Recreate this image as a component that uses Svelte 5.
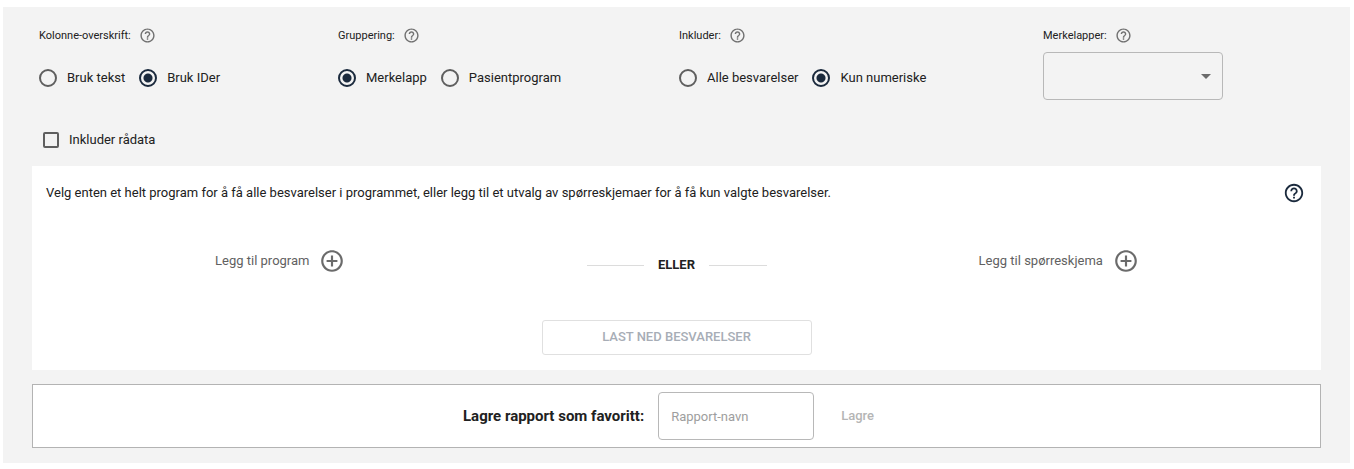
<script lang="ts">
  let headerMode = $state('id');
  let grouping = $state('label');
  let include = $state('numeric');
  let label = $state('');
  let rawData = $state(false);
  let reportName = $state('');
</script>

{#snippet helpIcon()}
  <svg viewBox="0 0 24 24" aria-hidden="true">
    <path
      d="M11 18h2v-2h-2v2zm1-16C6.48 2 2 6.48 2 12s4.48 10 10 10 10-4.48 10-10S17.52 2 12 2zm0 18c-4.41 0-8-3.59-8-8s3.59-8 8-8 8 3.59 8 8-3.59 8-8 8zm0-14c-2.21 0-4 1.79-4 4h2c0-1.1.9-2 2-2s2 .9 2 2c0 2-3 1.75-3 5h2c0-2.25 3-2.5 3-5 0-2.21-1.79-4-4-4z"
    />
  </svg>
{/snippet}

{#snippet addIcon()}
  <svg viewBox="0 0 24 24" aria-hidden="true">
    <path
      d="M13 7h-2v4H7v2h4v4h2v-4h4v-2h-4V7zm-1-5C6.48 2 2 6.48 2 12s4.48 10 10 10 10-4.48 10-10S17.52 2 12 2zm0 18c-4.41 0-8-3.59-8-8s3.59-8 8-8 8 3.59 8 8-3.59 8-8 8z"
    />
  </svg>
{/snippet}

<main class="report">
  <form class="options" onsubmit={(e) => e.preventDefault()}>
    <fieldset class="option">
      <legend class="caption">
        Kolonne-overskrift:
        <button type="button" class="help" aria-label="Hjelp">{@render helpIcon()}</button>
      </legend>
      <div class="radios">
        <label><input type="radio" value="text" bind:group={headerMode} />Bruk tekst</label>
        <label><input type="radio" value="id" bind:group={headerMode} />Bruk IDer</label>
      </div>
    </fieldset>

    <fieldset class="option">
      <legend class="caption">
        Gruppering:
        <button type="button" class="help" aria-label="Hjelp">{@render helpIcon()}</button>
      </legend>
      <div class="radios">
        <label><input type="radio" value="label" bind:group={grouping} />Merkelapp</label>
        <label><input type="radio" value="program" bind:group={grouping} />Pasientprogram</label>
      </div>
    </fieldset>

    <fieldset class="option">
      <legend class="caption">
        Inkluder:
        <button type="button" class="help" aria-label="Hjelp">{@render helpIcon()}</button>
      </legend>
      <div class="radios">
        <label><input type="radio" value="all" bind:group={include} />Alle besvarelser</label>
        <label><input type="radio" value="numeric" bind:group={include} />Kun numeriske</label>
      </div>
    </fieldset>

    <div class="option">
      <div class="caption">
        <label for="labels">Merkelapper:</label>
        <button type="button" class="help" aria-label="Hjelp">{@render helpIcon()}</button>
      </div>
      <div class="select">
        <select id="labels" bind:value={label}>
          <option value=""></option>
        </select>
        <svg viewBox="0 0 10 5" aria-hidden="true"><path d="M0 0h10L5 5z" /></svg>
      </div>
    </div>
  </form>

  <label class="raw-data"><input type="checkbox" bind:checked={rawData} />Inkluder rådata</label>

  <section class="selection">
    <div class="intro">
      <p>
        Velg enten et helt program for å få alle besvarelser i programmet, eller legg til et utvalg
        av spørreskjemaer for å få kun valgte besvarelser.
      </p>
      <button type="button" class="help large" aria-label="Hjelp">{@render helpIcon()}</button>
    </div>
    <div class="choices">
      <button type="button" class="add">Legg til program {@render addIcon()}</button>
      <div class="divider">ELLER</div>
      <button type="button" class="add">Legg til spørreskjema {@render addIcon()}</button>
    </div>
    <button type="button" class="download" disabled>LAST NED BESVARELSER</button>
  </section>

  <section class="favourite">
    <label for="report-name">Lagre rapport som favoritt:</label>
    <input id="report-name" type="text" placeholder="Rapport-navn" bind:value={reportName} />
    <button type="button" class="save" disabled>Lagre</button>
  </section>
</main>

<style>
  :global(body) {
    margin: 0;
    background: #fff;
  }
  .report {
    margin: 7px 4px 0 3px;
    padding: 20px 29px 15px;
    background: #f3f3f3;
    color: #212121;
    font: 13px/20px Roboto, sans-serif;
  }
  button,
  input,
  select {
    box-sizing: border-box;
    margin: 0;
    font: inherit;
  }
  button {
    padding: 0;
    border: 0;
    background: none;
    cursor: pointer;
  }
  button:disabled {
    cursor: default;
  }
  svg {
    display: block;
    fill: currentColor;
  }
  .options {
    display: grid;
    grid-template-columns: 299fr 341fr 364fr 278fr;
    padding-left: 7px;
  }
  .option {
    min-width: 0;
    margin: 0;
    padding: 0;
    border: 0;
  }
  .caption {
    display: flex;
    align-items: center;
    gap: 8px;
    height: 17px;
    padding: 0;
    font-size: 11px;
  }
  .help {
    flex: none;
    width: 17px;
    height: 17px;
    color: #707070;
  }
  .help.large {
    width: 22px;
    height: 22px;
    color: #1b2a3d;
  }
  .radios {
    display: flex;
    gap: 14px;
    margin-top: 24px;
  }
  .radios label,
  .raw-data {
    display: flex;
    align-items: center;
    gap: 10px;
    white-space: nowrap;
  }
  input[type='radio'] {
    appearance: none;
    width: 18px;
    height: 18px;
    border: 2px solid #5f5f5f;
    border-radius: 50%;
  }
  input[type='radio']:checked {
    border-color: #1b2a3d;
    background: radial-gradient(circle, #1b2a3d 4px, transparent 5px);
  }
  .select {
    display: flex;
    align-items: center;
    width: 180px;
    margin-top: 8px;
  }
  .select select {
    appearance: none;
    width: 100%;
    height: 48px;
    padding: 0 32px 0 12px;
    border: 1px solid #b8b8b8;
    border-radius: 4px;
    background: transparent;
  }
  .select svg {
    flex: none;
    width: 10px;
    height: 5px;
    margin-left: -22px;
    color: #6b6b6b;
    pointer-events: none;
  }
  .raw-data {
    width: fit-content;
    margin: 30px 0 16px 11px;
  }
  input[type='checkbox'] {
    appearance: none;
    width: 16px;
    height: 16px;
    border: 2px solid #5f5f5f;
    border-radius: 2px;
  }
  input[type='checkbox']:checked {
    background: #1b2a3d;
  }
  .selection {
    padding: 16px 14px 15px;
    background: #fff;
  }
  .intro {
    display: flex;
    align-items: center;
    justify-content: space-between;
    padding-right: 2px;
  }
  .intro p {
    margin: 0;
  }
  .choices {
    display: grid;
    grid-template-columns: 1fr 180px 1fr;
    align-items: center;
    gap: 58px;
    margin-top: 44px;
  }
  .add {
    display: flex;
    align-items: center;
    justify-self: center;
    gap: 10px;
    margin-bottom: 6px;
    padding-right: 14px;
    color: #616161;
  }
  .add svg {
    width: 26px;
    height: 26px;
    color: #6b6b6b;
  }
  .divider {
    display: flex;
    align-items: center;
    gap: 14px;
    padding-top: 2px;
    font-weight: 700;
  }
  .divider::before,
  .divider::after {
    content: '';
    flex: 1;
    height: 1px;
    background: #dcdcdc;
  }
  .download {
    display: block;
    width: 270px;
    height: 35px;
    margin: 40px auto 0;
    padding-bottom: 2px;
    border: 1px solid #e0e0e0;
    border-radius: 3px;
    color: #a7adb6;
    font-weight: 500;
  }
  .favourite {
    display: flex;
    align-items: center;
    justify-content: center;
    margin-top: 14px;
    padding: 7px;
    border: 1px solid #b3b3b3;
    background: #fff;
  }
  .favourite label {
    font-size: 15px;
    font-weight: 700;
  }
  .favourite input {
    width: 156px;
    height: 48px;
    margin: 0 27px 0 14px;
    padding: 0 12px;
    border: 1px solid #b8b8b8;
    border-radius: 4px;
    background: #fff;
  }
  .favourite input::placeholder {
    color: #9e9e9e;
    opacity: 1;
  }
  .save {
    box-sizing: content-box;
    padding-right: 16px;
    color: #b5b5b5;
    font-weight: 500;
  }
</style>
